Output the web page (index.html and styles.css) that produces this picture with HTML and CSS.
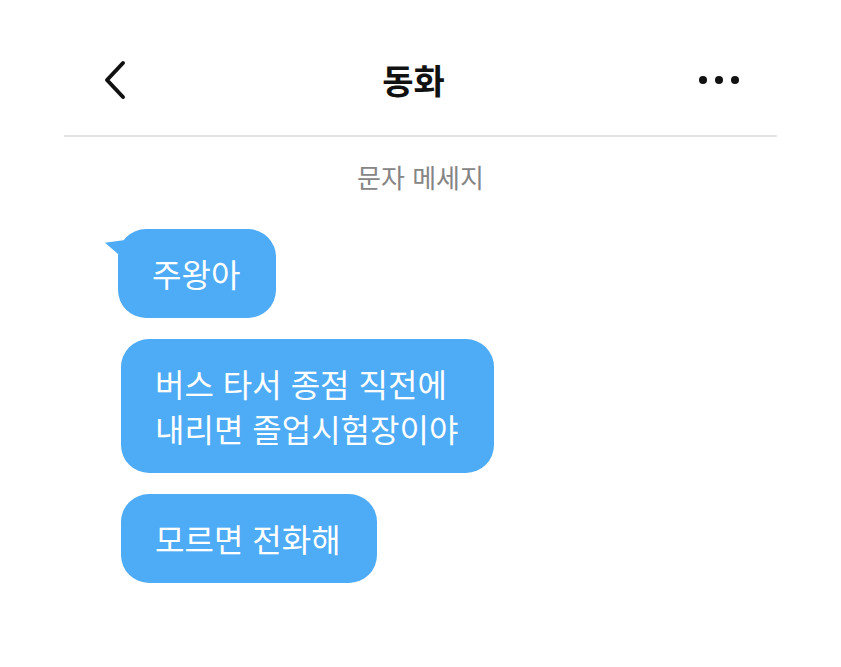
FILE: index.html
```html
<!DOCTYPE html>
<html lang="ko">
<head>
    <meta charset="UTF-8">
    <meta name="viewport" content="width=device-width, initial-scale=1.0">
    <title>동화</title>
    <link rel="stylesheet" href="styles.css">
</head>
<body>
    <div class="app">
        <header class="topbar">
            <button class="icon-btn back" aria-label="뒤로">
                <svg width="26" height="40" viewBox="0 0 26 40">
                    <path d="M21 3 L5 20 L21 37" fill="none" stroke="#111" stroke-width="4" stroke-linecap="round" stroke-linejoin="round"/>
                </svg>
            </button>
            <h1 class="title">동화</h1>
            <button class="icon-btn more" aria-label="더보기">
                <span class="dot"></span>
                <span class="dot"></span>
                <span class="dot"></span>
            </button>
        </header>

        <div class="label">문자 메세지</div>

        <div class="messages">
            <div class="bubble first">주왕아</div>
            <div class="bubble">버스 타서 종점 직전에<br>내리면 졸업시험장이야</div>
            <div class="bubble">모르면 전화해</div>
        </div>
    </div>
</body>
</html>
```

FILE: styles.css
```css
body {
    margin: 0;
    background: #fff;
    font-family: 'Noto Sans CJK KR', 'Noto Sans', sans-serif;
    color: #111;
}

.app {
    padding: 0 64px;
}

.topbar {
    margin-top: 25px;
    height: 110px;
    border-bottom: 2px solid #e4e4e4;
    display: flex;
    align-items: center;
    justify-content: space-between;
    padding: 0 38px 0 38px;
}

.icon-btn {
    background: none;
    border: none;
    padding: 0;
    display: flex;
    align-items: center;
    cursor: pointer;
}

.more {
    gap: 8px;
}

.dot {
    width: 8px;
    height: 8px;
    border-radius: 50%;
    background: #111;
}

.title {
    margin: 0;
    font-size: 34px;
    font-weight: 700;
    line-height: 40px;
}

.label {
    margin-top: 25px;
    text-align: center;
    font-size: 26px;
    line-height: 30px;
    color: #858585;
}

.messages {
    margin-top: 37px;
    display: flex;
    flex-direction: column;
    align-items: flex-start;
    gap: 21px;
    padding-left: 57px;
}

.bubble {
    position: relative;
    background: #4eabf6;
    color: #fff;
    font-size: 32px;
    line-height: 45px;
    padding: 22px 36px 22px 34px;
    border-radius: 28px;
}

.bubble.first {
    margin-left: -3px;
}

.bubble.first::before {
    content: '';
    position: absolute;
    left: -13px;
    top: 11px;
    width: 20px;
    height: 20px;
    background: #4eabf6;
    clip-path: polygon(0 14%, 100% 0, 100% 100%);
}
```
